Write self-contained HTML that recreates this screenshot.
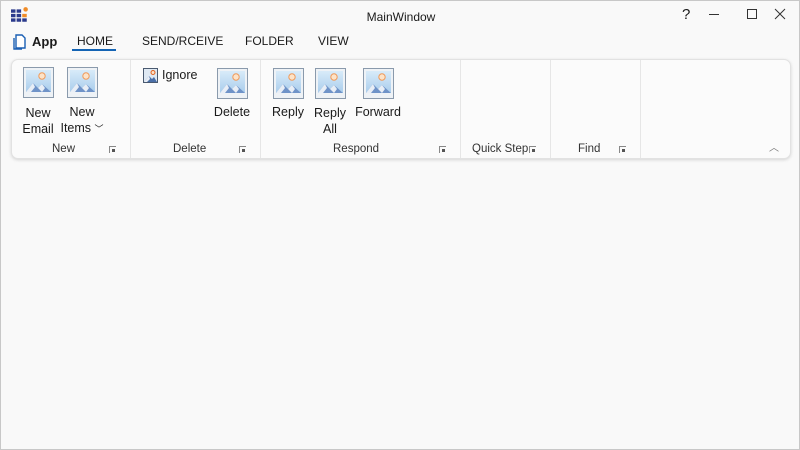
<!DOCTYPE html>
<html><head><meta charset="utf-8"><style>
*{margin:0;padding:0;box-sizing:border-box}
body{width:800px;height:450px;background:#f9f9f9;font-family:"Segoe UI","Liberation Sans",sans-serif;font-size:12px;color:#1a1a1a;position:relative;overflow:hidden;border:1px solid #c8c8c8}
.a{position:absolute}
.t{position:absolute;white-space:nowrap;text-align:center}
.ribbon{position:absolute;left:10px;top:58px;width:780px;height:100px;background:#fbfbfb;border:1px solid #e2e2e2;border-radius:7px;box-shadow:0 1px 3px rgba(0,0,0,.15)}
.sep{position:absolute;top:59px;width:1px;height:98px;background:#e6e6e6}
.ic{position:absolute;width:31px;height:31px}
.gl{position:absolute;top:142px;font-size:11.5px;color:#333}
.lc{position:absolute;top:145px;width:7px;height:7px;border-left:1px solid #888;border-top:1px solid #888}
.lc:after{content:"";position:absolute;left:2px;top:2px;width:3px;height:3px;background:#555}
</style></head><body>
<svg class="a" style="left:10px;top:6px" width="18" height="16" viewBox="0 0 16 14"><g fill="#2b3a8c"><rect x="0" y="2" width="4" height="3"/><rect x="5" y="2" width="4" height="3"/><rect x="0" y="6" width="4" height="3"/><rect x="5" y="6" width="4" height="3"/><rect x="0" y="10" width="4" height="3"/><rect x="5" y="10" width="4" height="3"/><rect x="10" y="10" width="4" height="3"/></g><rect x="10" y="6" width="4" height="3" fill="#f08c28"/><circle cx="13" cy="2" r="2" fill="#f08c28"/></svg>
<div class="t" style="left:0;width:800px;top:9px;font-size:12px">MainWindow</div>
<div class="t" style="left:681px;top:5px;font-size:15px">?</div>
<div class="a" style="left:708px;top:13px;width:10px;height:1px;background:#333"></div>
<div class="a" style="left:746px;top:8px;width:10px;height:10px;border:1px solid #333"></div>
<svg class="a" style="left:773px;top:7px" width="12" height="12"><path d="M1 1L11 11M11 1L1 11" stroke="#333" stroke-width="1"/></svg>
<svg class="a" style="left:12px;top:33px" width="13" height="16" viewBox="0 0 13 16"><path d="M3 1h6l3 3v10H3z" fill="#fff" stroke="#1a5fb4" stroke-width="1.4"/><path d="M1 4v11h8" fill="none" stroke="#1a5fb4" stroke-width="1.4"/></svg>
<div class="t" style="left:31px;top:33px;font-weight:bold;font-size:13px">App</div>
<div class="t" style="left:76px;top:33px">HOME</div>
<div class="a" style="left:71px;top:48px;width:44px;height:2px;background:#1464b4"></div>
<div class="t" style="left:141px;top:33px">SEND/RCEIVE</div>
<div class="t" style="left:244px;top:33px">FOLDER</div>
<div class="t" style="left:317px;top:33px">VIEW</div>
<div class="ribbon"></div>
<div class="sep" style="left:129px"></div><div class="sep" style="left:259px"></div><div class="sep" style="left:459px"></div><div class="sep" style="left:549px"></div><div class="sep" style="left:639px"></div>
<svg width="0" height="0" style="position:absolute"><defs><linearGradient id="g" x1="0" y1="0" x2="0" y2="1"><stop offset="0" stop-color="#d8ebf9"/><stop offset="1" stop-color="#a9cdec"/></linearGradient>
<symbol id="im" viewBox="0 0 31 31"><rect x=".5" y=".5" width="30" height="30" fill="#eef2f6" stroke="#8a9aac"/><rect x="3" y="3" width="25" height="22" fill="url(#g)"/><circle cx="19" cy="9" r="3.2" fill="#fde3c8" stroke="#f09a5a"/><path d="M3 25l7-9 5 5 4-4 9 8z" fill="#6f93c8"/><path d="M3 25l7-9 2 4-4 5z" fill="#e8eef6"/><path d="M15 21l4-4 3 4-3 4z" fill="#e8eef6"/></symbol>
<symbol id="sm" viewBox="0 0 15 15"><rect x=".5" y=".5" width="14" height="14" fill="#dfe9f3" stroke="#4a5a70"/><circle cx="10" cy="4.5" r="2" fill="#fde3c8" stroke="#e0601e"/><path d="M1 14l5-6 3 3 2-2 3 5z" fill="#4a6fa8"/><path d="M1 14l5-6 1 3-3 3z" fill="#e8eef6"/></symbol></defs></svg>
<svg class="ic" style="left:22px;top:66px"><use href="#im"/></svg>
<svg class="ic" style="left:66px;top:66px"><use href="#im"/></svg>
<svg class="ic" style="left:216px;top:67px"><use href="#im"/></svg>
<svg class="ic" style="left:272px;top:67px"><use href="#im"/></svg>
<svg class="ic" style="left:314px;top:67px"><use href="#im"/></svg>
<svg class="ic" style="left:362px;top:67px"><use href="#im"/></svg>
<svg class="a" style="left:142px;top:67px" width="15" height="15"><use href="#sm"/></svg>
<div class="t" style="left:161px;top:67px;font-size:12.5px">Ignore</div>
<div class="t" style="left:14px;width:46px;top:104px;line-height:16px;font-size:12.5px">New<br>Email</div>
<div class="t" style="left:58px;width:46px;top:103px;line-height:16px;font-size:12.5px">New<br>Items <span style="font-size:9px">﹀</span></div>
<div class="t" style="left:208px;width:46px;top:104px;font-size:12.5px">Delete</div>
<div class="t" style="left:264px;width:46px;top:104px;font-size:12.5px">Reply</div>
<div class="t" style="left:306px;width:46px;top:104px;line-height:16px;font-size:12.5px">Reply<br>All</div>
<div class="t" style="left:350px;width:54px;top:104px;font-size:12.5px">Forward</div>
<div class="gl" style="left:51px">New</div><div class="lc" style="left:108px"></div>
<div class="gl" style="left:172px">Delete</div><div class="lc" style="left:238px"></div>
<div class="gl" style="left:332px">Respond</div><div class="lc" style="left:438px"></div>
<div class="gl" style="left:471px">Quick Step</div><div class="lc" style="left:528px"></div>
<div class="gl" style="left:577px">Find</div><div class="lc" style="left:618px"></div>
<div class="t" style="left:768px;top:138px;font-size:10px;color:#777">︿</div>
</body></html>
